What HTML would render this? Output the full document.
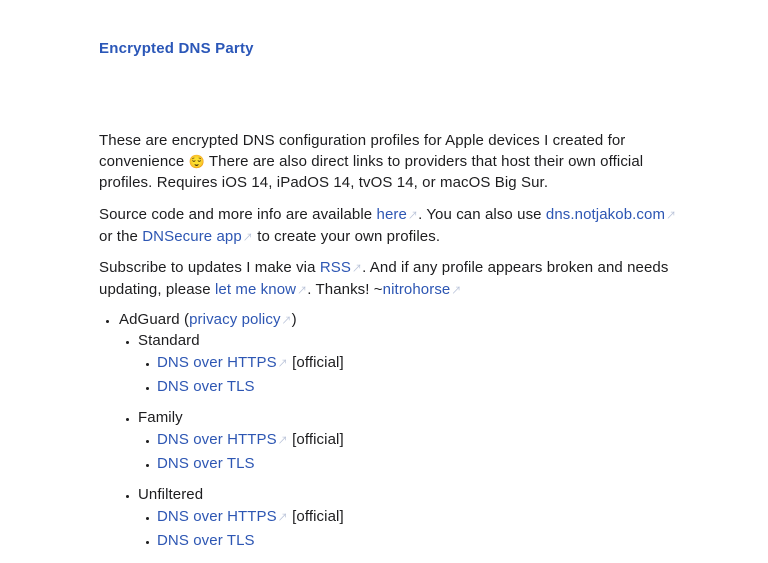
<!DOCTYPE html>
<html><head><meta charset="utf-8"><style>
body{margin:0;background:#fff;width:768px;height:563px;overflow:hidden;font-family:"Liberation Sans","Noto Sans CJK JP",sans-serif;font-size:15px;color:#1d1d1f}
.l{position:absolute;left:99px;line-height:21px;white-space:nowrap;letter-spacing:0.1px}
a{color:#2d56b3;text-decoration:none}
.ar{color:#b8c2d8;font-size:10px;margin-left:1px}
.t{font-weight:bold;color:#2b57b8;font-size:15px;letter-spacing:0.2px}
.b{position:absolute;width:3px;height:3px;background:#1d1d1f;border-radius:50%}
</style></head><body>
<div class="l t" style="top:38px">Encrypted DNS Party</div>
<div class="l" style="top:130px">These are encrypted DNS configuration profiles for Apple devices I created for</div>
<div class="l" style="top:151px">convenience <span style="font-size:13px">😌</span> There are also direct links to providers that host their own official</div>
<div class="l" style="top:172px">profiles. Requires iOS 14, iPadOS 14, tvOS 14, or macOS Big Sur.</div>
<div class="l" style="top:204px">Source code and more info are available <a>here</a><span class="ar">↗</span>. You can also use <a>dns.notjakob.com</a><span class="ar">↗</span></div>
<div class="l" style="top:226px">or the <a>DNSecure app</a><span class="ar">↗</span> to create your own profiles.</div>
<div class="l" style="top:257px">Subscribe to updates I make via <a>RSS</a><span class="ar">↗</span>. And if any profile appears broken and needs</div>
<div class="l" style="top:279px">updating, please <a>let me know</a><span class="ar">↗</span>. Thanks! ~<a>nitrohorse</a><span class="ar">↗</span></div>

<div class="b" style="left:106px;top:320px"></div><div class="l" style="left:119px;top:309px">AdGuard (<a>privacy policy</a><span class="ar">↗</span>)</div>
<div class="b" style="left:126px;top:341px"></div><div class="l" style="left:138px;top:330px">Standard</div>
<div class="b" style="left:146px;top:363px"></div><div class="l" style="left:157px;top:352px"><a>DNS over HTTPS</a><span class="ar">↗</span> [official]</div>
<div class="b" style="left:146px;top:387px"></div><div class="l" style="left:157px;top:376px"><a>DNS over TLS</a></div>
<div class="b" style="left:126px;top:418px"></div><div class="l" style="left:138px;top:407px">Family</div>
<div class="b" style="left:146px;top:440px"></div><div class="l" style="left:157px;top:429px"><a>DNS over HTTPS</a><span class="ar">↗</span> [official]</div>
<div class="b" style="left:146px;top:464px"></div><div class="l" style="left:157px;top:453px"><a>DNS over TLS</a></div>
<div class="b" style="left:126px;top:495px"></div><div class="l" style="left:138px;top:484px">Unfiltered</div>
<div class="b" style="left:146px;top:517px"></div><div class="l" style="left:157px;top:506px"><a>DNS over HTTPS</a><span class="ar">↗</span> [official]</div>
<div class="b" style="left:146px;top:541px"></div><div class="l" style="left:157px;top:530px"><a>DNS over TLS</a></div>
</body></html>
